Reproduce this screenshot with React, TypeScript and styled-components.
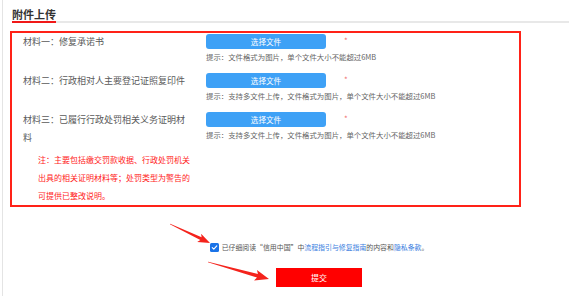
import React from "react";
import styled, { createGlobalStyle } from "styled-components";

const GlobalStyle = createGlobalStyle`
  html, body { margin: 0; padding: 0; background: #fff; }
  body { font-family: "Noto Sans CJK SC", "Noto Sans", sans-serif; }
  * { box-sizing: border-box; }
`;

const Page = styled.div`
  position: relative;
  width: 567px;
  height: 296px;
  margin-left: 2px;
  border-left: 1px solid #e4e4e4;
  padding-left: 9px;
  overflow: hidden;
`;

const Header = styled.div`
  height: 23px;
  border-bottom: 2px solid #e8e8e8;
  display: flex;
  align-items: flex-end;
`;

const Title = styled.h2`
  margin: 0 0 -2px 0;
  font-size: 11px;
  line-height: 14px;
  font-weight: 700;
  color: #333;
  border-bottom: 2px solid #f01818;
`;

const Box = styled.div`
  margin: 8px 0 0 -2px;
  width: 511px;
  border: 2px solid #ff2218;
  padding: 1px 0 0 0;
  display: flex;
  flex-direction: column;
  gap: 10px;
`;

const Row = styled.div`
  display: grid;
  grid-template-columns: 194px 1fr;
`;

const LeftCell = styled.div`
  padding-left: 11px;
`;

const Label = styled.div`
  width: 166px;
  font-size: 9px;
  line-height: 18px;
  margin-top: -1px;
  color: #5a5a5a;
`;

const Note = styled.div`
  width: 158px;
  margin: 4px 0 0 15px;
  font-size: 8px;
  line-height: 18px;
  color: #ff1a1a;
`;

const ButtonLine = styled.div`
  display: flex;
  align-items: flex-start;
`;

const PickButton = styled.button`
  width: 120px;
  height: 15px;
  padding: 0;
  border: none;
  border-radius: 3px;
  background: #3ea1f6;
  color: #fff;
  font-family: inherit;
  font-size: 7.6px;
  line-height: 15px;
`;

const Star = styled.span`
  margin: 2px 0 0 18px;
  font-size: 8px;
  line-height: 9px;
  color: #f27070;
`;

const Hint = styled.div`
  margin-top: 2px;
  font-size: 7.4px;
  line-height: 12px;
  color: #666;
  white-space: nowrap;
`;

const Footer = styled.div`
  width: 212px;
  margin: 34px 0 0 201px;
  display: flex;
  flex-direction: column;
  align-items: center;
`;

const Agree = styled.label`
  display: flex;
  align-items: center;
  gap: 3px;
  font-size: 6.9px;
  line-height: 12px;
  color: #555;
  white-space: nowrap;
`;

const Check = styled.span`
  width: 9px;
  height: 9px;
  border-radius: 1.5px;
  background: #1a73e8;
  display: flex;
  align-items: center;
  justify-content: center;
`;

const Link = styled.a`
  color: #3a7ee0;
  text-decoration: none;
`;

const Submit = styled.button`
  margin-top: 15px;
  width: 86px;
  height: 19px;
  border: none;
  padding: 0;
  background: #ff0000;
  color: #fff;
  font-family: inherit;
  font-size: 8px;
  line-height: 19px;
`;

const Overlay = styled.svg`
  position: absolute;
  left: -3px;
  top: 0;
  width: 569px;
  height: 296px;
  pointer-events: none;
`;

type Mat = { label: string; hint: string; note?: string };

const mats: Mat[] = [
  { label: "材料一：修复承诺书", hint: "提示：文件格式为图片，单个文件大小不能超过6MB" },
  {
    label: "材料二：行政相对人主要登记证照复印件",
    hint: "提示：支持多文件上传，文件格式为图片，单个文件大小不能超过6MB",
  },
  {
    label: "材料三：已履行行政处罚相关义务证明材料",
    hint: "提示：支持多文件上传，文件格式为图片，单个文件大小不能超过6MB",
    note: "注：主要包括缴交罚款收据、行政处罚机关出具的相关证明材料等；处罚类型为警告的可提供已整改说明。",
  },
];

export default function App() {
  return (
    <>
      <GlobalStyle />
      <Page>
        <Header>
          <Title>附件上传</Title>
        </Header>
        <Box>
          {mats.map((m) => (
            <Row key={m.label}>
              <LeftCell>
                <Label>{m.label}</Label>
                {m.note && <Note>{m.note}</Note>}
              </LeftCell>
              <div>
                <ButtonLine>
                  <PickButton>选择文件</PickButton>
                  <Star>*</Star>
                </ButtonLine>
                <Hint>{m.hint}</Hint>
              </div>
            </Row>
          ))}
        </Box>
        <Footer>
          <Agree>
            <Check>
              <svg width="7" height="7" viewBox="0 0 10 10">
                <path d="M1.8 5.3 L4 7.4 L8.3 2.6" fill="none" stroke="#fff" strokeWidth="1.6" strokeLinecap="round" strokeLinejoin="round" />
              </svg>
            </Check>
            <span>
              已仔细阅读“信用中国”中<Link>流程指引与修复指南</Link>的内容和<Link>隐私条款</Link>。
            </span>
          </Agree>
          <Submit>提交</Submit>
        </Footer>
        <Overlay viewBox="0 0 569 296">
          <polygon
            fill="#f4231c"
            points="170.13,223.73 201.61,237.35 201.09,233.79 210,243 197.23,241.91 200.33,240.06 169.87,224.27"
          />
          <polygon
            fill="#f4231c"
            points="208.08,261.71 257.92,274.05 256.98,269.94 269,279 254.04,280.54 256.96,277.51 207.92,262.29"
          />
        </Overlay>
      </Page>
    </>
  );
}
